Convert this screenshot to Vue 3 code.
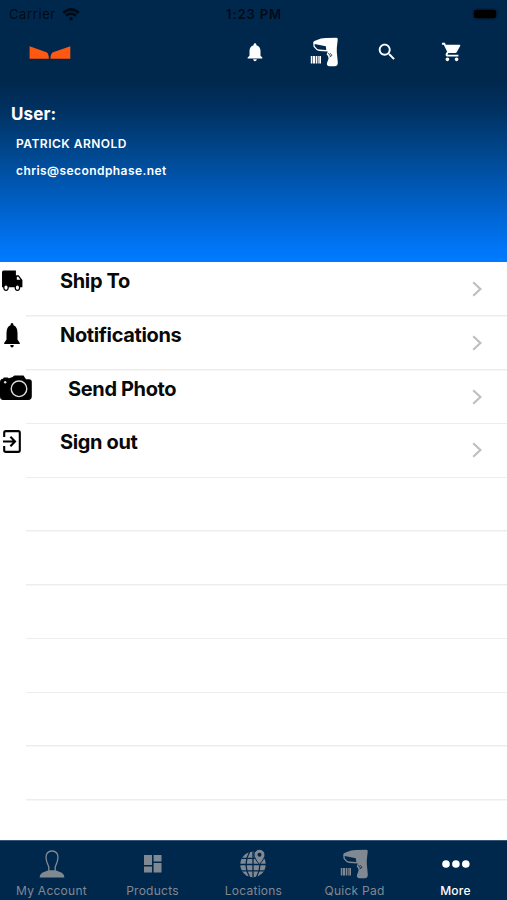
<script setup>
const rows = [
  { icon: 'truck', label: 'Ship To' },
  { icon: 'bell', label: 'Notifications' },
  { icon: 'camera', label: 'Send Photo' },
  { icon: 'exit', label: 'Sign out' },
]
const tabs = [
  { icon: 'person', label: 'My Account' },
  { icon: 'dashboard', label: 'Products' },
  { icon: 'globe', label: 'Locations' },
  { icon: 'scanner', label: 'Quick Pad' },
  { icon: 'dots', label: 'More' },
]
</script>

<template>
  <div class="screen">
    <svg class="defs" aria-hidden="true">
      <symbol id="scanner" viewBox="0 0 29 30">
        <path fill-rule="evenodd" d="M3.2 5.8Q3.3 4.4 5 3.8L11 1.6Q13 .9 16 .9L26.5.8Q28 .9 27.7 2.8L26.8 11Q26.6 14 27.2 19L27.8 25.5Q28 29.2 24.6 29.2H19.5Q16.3 29 17 26L18.6 21.5 18 19 16.6 17.4 17.8 14.4 9 14Q6.2 13.6 3.5 9.8ZM4.6 7 4.8 9.2Q6.7 12.1 9.1 12.5L16.3 13 15.8 9.3Z" />
        <path class="trigger" d="M18.3 16 20.5 19.2M20.2 16.2 22 18.4 19.6 20" />
        <path d="M.8 19h1.6v7.6H.8zM3 19h2.3v7.6H3zM6 19h1v7.6H6zM7.6 19h1.1v7.6H7.6zM9.3 19H11v7.6H9.3z" />
      </symbol>
    </svg>

    <header class="hero">
      <div class="status">
        <div class="carrier">
          <span>Carrier</span>
          <svg class="wifi" viewBox="0 0 18 13"><path d="M1.2 5Q9-2 16.8 5M4 7.8Q9 3.4 14 7.8" /><circle cx="9" cy="10.8" r="1.8" /></svg>
        </div>
        <span class="time">1:23 PM</span>
        <span class="battery"></span>
      </div>
      <div class="toolbar">
        <svg class="logo" viewBox="0 0 42 13"><path d="M.6.3 17.5 6.2Q19.7 7.4 19.9 12.7H.6ZM41.3.3 24 6.2Q21.6 7.4 21.4 12.7H41.3Z" /></svg>
        <svg class="t-bell" viewBox="0 0 24 24"><path d="M12 22c1.1 0 2-.9 2-2h-4c0 1.1.89 2 2 2zm6-6v-5c0-3.07-1.64-5.64-4.5-6.32V4c0-.83-.67-1.5-1.5-1.5s-1.5.67-1.5 1.5v.68C7.63 5.36 6 7.92 6 11v5l-2 2v1h16v-1l-2-2z" /></svg>
        <svg class="t-scanner"><use href="#scanner" /></svg>
        <svg class="t-search" viewBox="0 0 24 24"><path d="M15.5 14h-.79l-.28-.27C15.41 12.59 16 11.11 16 9.5 16 5.91 13.09 3 9.5 3S3 5.91 3 9.5 5.91 16 9.5 16c1.61 0 3.09-.59 4.23-1.57l.27.28v.79l5 4.99L20.49 19l-4.99-5zm-6 0C7.01 14 5 11.99 5 9.5S7.01 5 9.5 5 14 7.01 14 9.5 11.99 14 9.5 14z" /></svg>
        <svg class="t-cart" viewBox="0 0 24 24"><path d="M7 18c-1.1 0-1.99.9-1.99 2S5.9 22 7 22s2-.9 2-2-.9-2-2-2zM1 2v2h2l3.6 7.59-1.35 2.45c-.16.28-.25.61-.25.96 0 1.1.9 2 2 2h12v-2H7.42c-.14 0-.25-.11-.25-.25l.03-.12.9-1.63h7.45c.75 0 1.41-.41 1.75-1.03l3.58-6.49A1 1 0 0 0 20 4H5.21l-.94-2H1zm16 16c-1.1 0-1.99.9-1.99 2s.89 2 1.99 2 2-.9 2-2-.9-2-2-2z" /></svg>
      </div>
      <div class="user">
        <div class="heading">User:</div>
        <div class="name">PATRICK ARNOLD</div>
        <div class="email">chris@secondphase.net</div>
      </div>
    </header>

    <main class="list">
      <div v-for="row in rows" :key="row.label" class="row">
        <div class="glyph">
          <svg v-if="row.icon === 'truck'" class="truck" viewBox="0 0 22 22"><path d="M2.5.4h12.4V5.3h2.8L21.4 10v7.2h-2.3a3 3 0 0 1-5.3 0H7.6a3 3 0 0 1-5.3 0H1V2.4Q1 .4 2.5.4Z" /><path class="hole" d="M15.8 6.8h1.5l2.1 3h-3.6z" /><ellipse class="wheel" cx="5" cy="17.6" rx="2.2" ry="2.8" /><ellipse class="wheel" cx="16.4" cy="17.6" rx="2.2" ry="2.8" /></svg>
          <svg v-if="row.icon === 'bell'" class="bell" viewBox="0 0 16 25"><path d="M8 0Q9.5 0 9.5 2.3 13.5 4 13.5 10v6.5L15.8 20v1H.2v-1l2.3-3.5V10q0-6 4-7.7Q6.5 0 8 0ZM6.2 22h3.6q-.2 2.5-1.8 2.5T6.2 22Z" /></svg>
          <svg v-if="row.icon === 'camera'" class="camera" viewBox="0 0 32 26"><path d="M0 7Q0 4 3 3.7L3.8 2.4H7.5L9 3.2 12.5 2 14.5.6h9L26 4.3h3Q31.7 4.4 31.8 7v14.5Q31.6 24.7 28.5 25H2.5Q0 24.5 0 22Z" /><circle class="lens" cx="19" cy="13.8" r="7.8" /><circle class="flash" cx="5.2" cy="7.2" r="1.2" /></svg>
          <svg v-if="row.icon === 'exit'" class="exit" viewBox="0 0 18 23"><path d="M1.2 7V2.8Q1.2 1.1 2.8 1.1h12.4q1.6 0 1.6 1.7v17.4q0 1.7-1.6 1.7H2.8q-1.6 0-1.6-1.7V16M0 11.5h11.5M7.4 6.8 12 11.5l-4.6 4.7" /></svg>
        </div>
        <span class="label" :class="{ shifted: row.icon === 'camera' }">{{ row.label }}</span>
        <svg class="chevron" viewBox="0 0 10 16"><path d="M1.2 1.2 8.4 8l-7.2 6.8" /></svg>
      </div>
      <div v-for="n in 6" :key="n" class="row"></div>
    </main>

    <nav class="tabs">
      <div v-for="tab in tabs" :key="tab.label" class="tab" :class="{ active: tab.icon === 'dots' }">
        <div class="tab-icon">
          <svg v-if="tab.icon === 'person'" class="person" viewBox="0 0 26 28"><path d="M.6 27.4Q1 23.4 5 22L9.5 20.2h7L21 22q4 1.4 4.4 5.4Z" /><path class="outline" d="M9.8 20.8Q10.5 17 8.4 13.4 6.2 8 7.6 4.3 9 1 13 1t5.4 3.3q1.4 3.7-.8 9.1-2.1 3.6-1.4 7.4" /></svg>
          <svg v-if="tab.icon === 'dashboard'" class="dashboard" viewBox="0 0 18 18"><path d="M0 0h8v10H0zM9.6 0H17.5v6.5H9.6zM0 11.5h8v6H0zM9.6 8H17.5v9.5H9.6z" /></svg>
          <svg v-if="tab.icon === 'globe'" class="globe" viewBox="0 0 27 29"><circle cx="13" cy="15.5" r="12.7" /><path class="grid" d="M0 15.5h26M2 9.3h22M2 21.8h22M13 3v25M9.5 3Q2.5 15.5 9.5 28M16.5 3Q23.5 15.5 16.5 28" /><path class="pin" d="M19.5 15.5Q14 9 14 5.8a5.5 5.5 0 0 1 11 0Q25 9 19.5 15.5Z" /><circle class="pin-hole" cx="19.5" cy="5.8" r="2" /></svg>
          <svg v-if="tab.icon === 'scanner'" class="tab-scanner"><use href="#scanner" /></svg>
          <svg v-if="tab.icon === 'dots'" class="dots" viewBox="0 0 28 8"><circle cx="4" cy="4" r="3.8" /><circle cx="13.9" cy="4" r="3.8" /><circle cx="23.8" cy="4" r="3.8" /></svg>
        </div>
        <span class="tab-label">{{ tab.label }}</span>
      </div>
    </nav>
  </div>
</template>

<style>
body { margin: 0; }
</style>

<style scoped>
.screen { width: 507px; height: 900px; display: flex; flex-direction: column; background: #fff; font-family: Inter, "Liberation Sans", sans-serif; overflow: hidden; }
svg { display: block; flex: none; fill: currentColor; }
.defs { width: 0; height: 0; position: absolute; }
.hero { height: 262px; flex: none; color: #fff; background: linear-gradient(#00284d 0, #00284d 82px, #003263 112px, #004a94 158px, #0060c8 205px, #0076f8 250px, #007aff 262px); }
.status { height: 27px; display: grid; grid-template-columns: 1fr auto 1fr; align-items: center; padding: 1px 11px 0; box-sizing: border-box; color: #000b18; font-size: 13px; line-height: 26px; }
.carrier { display: flex; align-items: center; gap: 6px; margin-left: -2px; letter-spacing: .6px; }
.wifi { width: 18px; height: 13px; }
.wifi path { fill: none; stroke: currentColor; stroke-width: 2.8; }
.time { padding-left: 1px; font-weight: 600; letter-spacing: .9px; }
.battery { justify-self: end; width: 22px; height: 8px; border-radius: 2px; background: #000; box-shadow: 0 0 3px #000; }
.toolbar { height: 50px; display: flex; align-items: center; padding-left: 29px; }
.logo { width: 42px; height: 13px; color: #ff5812; }
.t-bell { width: 22px; height: 22px; margin-left: 173px; }
.t-scanner { width: 29px; height: 30px; margin-left: 44px; }
.trigger { fill: none; stroke: #00284d; stroke-width: .8; }
.t-search { width: 22px; height: 22px; margin-left: 37px; }
.t-cart { width: 22px; height: 22px; margin-left: 43px; }
.user { padding: 25px 0 0 11px; font-weight: 700; }
.heading { height: 24px; line-height: 24px; font-size: 17px; letter-spacing: .1px; }
.name, .email { padding-left: 5px; font-size: 12px; line-height: 20px; font-weight: 600; letter-spacing: .48px; }
.name { margin-top: 8px; }
.email { margin-top: 7px; letter-spacing: .43px; }
.list { height: 578px; flex: none; box-sizing: border-box; padding-top: 1px; overflow: hidden; }
.row { height: 53.75px; display: flex; align-items: flex-start; box-sizing: border-box; background: linear-gradient(#ededee, #ededee) 26px 100% / 481px 1.5px no-repeat; }
.glyph { width: 60px; height: 40px; flex: none; color: #000; }
.truck { width: 22px; height: 22px; margin: 7px 0 0 1px; }
.hole, .wheel { fill: #fff; }
.wheel { stroke: #000; stroke-width: 1.2; }
.bell { width: 16px; height: 25px; margin: 6px 0 0 4px; }
.camera { width: 32px; height: 26px; margin-top: 4px; }
.lens { fill: #000; stroke: #ddd; stroke-width: 1.4; }
.flash { fill: #ddd; }
.exit { width: 18px; height: 23px; margin: 6px 0 0 3px; }
.exit path { fill: none; stroke: currentColor; stroke-width: 2.1; }
.label { flex: 1; padding-top: 5px; font-size: 20px; line-height: 26px; font-weight: 700; letter-spacing: -.36px; color: #090909; }
.shifted { padding-left: 8px; }
.chevron { width: 10px; height: 16px; margin: 18px 25px 0 0; }
.chevron path { fill: none; stroke: #bfbfc1; stroke-width: 2.2; }
.tabs { height: 60px; flex: none; box-sizing: border-box; border-top: 1px solid #365777; padding-left: 1px; display: grid; grid-template-columns: repeat(5, 101px); background: #00284d; color: #808991; }
.tab { display: flex; flex-direction: column; align-items: center; }
.tab-icon { height: 45px; display: flex; align-items: center; }
.tab-label { margin-top: -3px; font-size: 12px; line-height: 16px; letter-spacing: .25px; white-space: nowrap; }
.active { color: #fff; }
.active .tab-label { font-weight: 500; }
.person { width: 26px; height: 28px; }
.outline { fill: none; stroke: currentColor; stroke-width: 1.3; }
.dashboard { width: 18px; height: 18px; }
.globe { width: 27px; height: 29px; }
.grid { fill: none; stroke: #00284d; stroke-width: 1.3; }
.pin { stroke: #00284d; stroke-width: 1; }
.pin-hole { fill: #00284d; }
.tab-scanner { width: 29px; height: 30px; }
.dots { width: 28px; height: 8px; }
</style>
